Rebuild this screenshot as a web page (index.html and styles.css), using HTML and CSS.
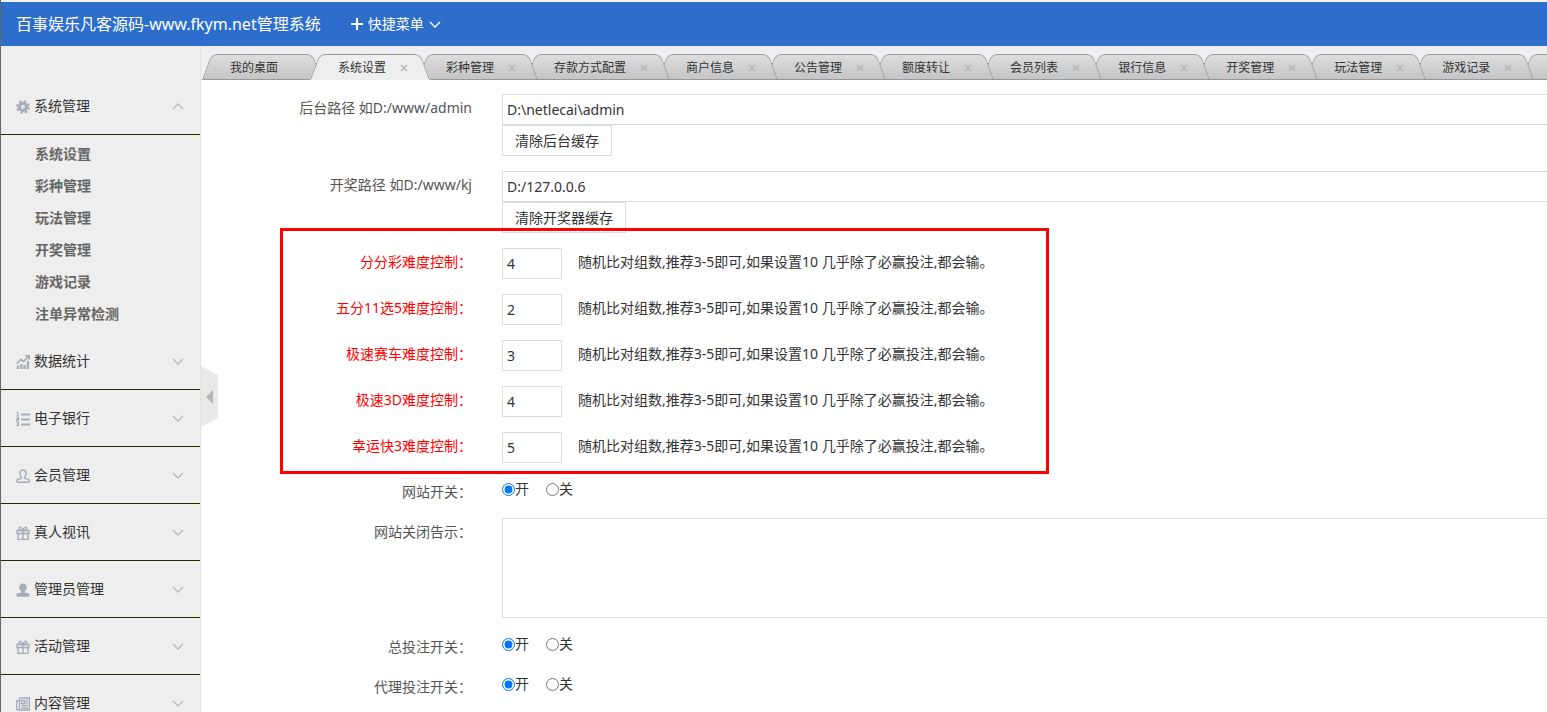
FILE: index.html
```html
<!DOCTYPE html>
<html lang="zh-CN">
<head>
  <meta charset="UTF-8">
  <meta name="viewport" content="width=device-width, initial-scale=1.0">
  <title>百事娱乐凡客源码-www.fkym.net管理系统</title>
  <link rel="stylesheet" href="styles.css">
</head>
<body>
  <!-- Shared icons -->
  <svg class="sprite" aria-hidden="true">
    <symbol id="i-gear" viewBox="0 0 14 14">
      <circle cx="7" cy="7" r="3.6" fill="none" stroke="currentColor" stroke-width="3"/>
      <circle cx="7" cy="7" r="5.800" fill="none" stroke="currentColor" stroke-width="2" stroke-dasharray="2.600 1.955"/>
      <path d="M7 7l3 3" stroke="currentColor" stroke-width="1"/>
    </symbol>
    <symbol id="i-chart" viewBox="0 0 14 14">
      <path d="M2 14v-3.500M5.300 14V9M8.600 14v-4M12 14V6" fill="none" stroke="currentColor" stroke-width="2.400"/>
      <path d="M.8 8.500l4.200-4 2.500 2L12 2" fill="none" stroke="currentColor" stroke-width="1.700"/>
      <path d="M8.500 0H14v5.500z" fill="currentColor"/>
    </symbol>
    <symbol id="i-list" viewBox="0 0 14 14">
      <path d="M5 2.500h9M5 7.500h9M5 12.500h9" stroke="currentColor" stroke-width="2"/>
      <path d="M.5.5h1.200v3M.5 4h2.500M.5 5.500h2v1.800h-2V9h2.500M.5 10.500h2v3h-2M1 12h1.500" fill="none" stroke="currentColor" stroke-width="1.200"/>
    </symbol>
    <symbol id="i-user" viewBox="0 0 14 14">
      <path d="M5.400 8.200C4.300 7 3.900 5.500 3.900 4.200 3.900 2.200 5.200 1 7 1s3.100 1.200 3.100 3.200c0 1.300-.4 2.800-1.500 4v1.100l3.600 1c.8.3 1.200.9 1.200 1.700 0 .8-.4 1.200-1.200 1.200H1.800c-.8 0-1.200-.4-1.200-1.200 0-.8.4-1.400 1.200-1.700l3.600-1z" fill="none" stroke="currentColor" stroke-width="1.400"/>
    </symbol>
    <symbol id="i-user-fill" viewBox="0 0 14 14">
      <path d="M5.400 8.600C4.100 7.500 3.200 6 3.200 4.400 3.200 2 4.900.5 7 .5s3.800 1.500 3.800 3.900c0 1.600-.9 3.100-2.200 4.200v.8l3.600.8c.8.2 1.300.8 1.300 1.600v1.200c0 .5-.3.800-.8.800H1.300c-.5 0-.8-.3-.8-.8v-1.200c0-.8.5-1.400 1.300-1.600l3.600-.8z" fill="currentColor"/>
    </symbol>
    <symbol id="i-gift" viewBox="0 0 14 14">
      <path d="M1 4.500h12v3H1zM2 7.500h10v6H2zM7 4.500v9" fill="none" stroke="currentColor" stroke-width="1.400"/>
      <path d="M7 4.500C5.500 4.500 3.200 4 3.200 2.400 3.200.6 6 .6 7 4.500 8 .6 10.800.6 10.800 2.400 10.800 4 8.500 4.500 7 4.500z" fill="none" stroke="currentColor" stroke-width="1.400"/>
    </symbol>
    <symbol id="i-news" viewBox="0 0 14 14">
      <path d="M3.500 1h10v12H2C1.100 13 .6 12.500.6 11.600V4H3.500M3.500 1v12" fill="none" stroke="currentColor" stroke-width="1.400"/>
      <path d="M5.500 3.500h3v3h-3zM9.500 3.500H12M9.500 6H12M5.500 8.500H12M5.500 11H12" fill="none" stroke="currentColor" stroke-width="1.300"/>
    </symbol>
    <symbol id="i-down" viewBox="0 0 12 7">
      <path d="M1 1l5 5 5-5" fill="none" stroke="currentColor" stroke-width="1.400"/>
    </symbol>
    <symbol id="i-close" viewBox="0 0 8 8">
      <path d="M1 1l6 6M7 1L1 7" fill="none" stroke="currentColor" stroke-width="1.400"/>
    </symbol>
  </svg>

  <header class="header">
    <a class="logo" href="#">百事娱乐凡客源码-www.fkym.net管理系统</a>
    <button class="quick" type="button">
      <svg class="plus" viewBox="0 0 12 12"><path d="M6 0v12M0 6h12" stroke="currentColor" stroke-width="2"/></svg>
      快捷菜单
      <svg class="arrow"><use href="#i-down"/></svg>
    </button>
  </header>

  <div class="layout">
    <aside class="sidebar">
      <a class="menu-title open" href="#"><svg class="icon"><use href="#i-gear"/></svg>系统管理<svg class="arrow"><use href="#i-down"/></svg></a>
      <ul class="submenu">
        <li><a href="#">系统设置</a></li>
        <li><a href="#">彩种管理</a></li>
        <li><a href="#">玩法管理</a></li>
        <li><a href="#">开奖管理</a></li>
        <li><a href="#">游戏记录</a></li>
        <li><a href="#">注单异常检测</a></li>
      </ul>
      <a class="menu-title" href="#"><svg class="icon"><use href="#i-chart"/></svg>数据统计<svg class="arrow"><use href="#i-down"/></svg></a>
      <a class="menu-title" href="#"><svg class="icon"><use href="#i-list"/></svg>电子银行<svg class="arrow"><use href="#i-down"/></svg></a>
      <a class="menu-title" href="#"><svg class="icon"><use href="#i-user"/></svg>会员管理<svg class="arrow"><use href="#i-down"/></svg></a>
      <a class="menu-title" href="#"><svg class="icon"><use href="#i-gift"/></svg>真人视讯<svg class="arrow"><use href="#i-down"/></svg></a>
      <a class="menu-title" href="#"><svg class="icon"><use href="#i-user-fill"/></svg>管理员管理<svg class="arrow"><use href="#i-down"/></svg></a>
      <a class="menu-title" href="#"><svg class="icon"><use href="#i-gift"/></svg>活动管理<svg class="arrow"><use href="#i-down"/></svg></a>
      <a class="menu-title" href="#"><svg class="icon"><use href="#i-news"/></svg>内容管理<svg class="arrow"><use href="#i-down"/></svg></a>
    </aside>

    <main class="main">
      <button class="toggle" type="button" aria-label="收起菜单"></button>

      <ul class="tabs">
        <li class="tab"><a href="#">我的桌面</a></li>
        <li class="tab active"><a href="#">系统设置</a><svg class="close"><use href="#i-close"/></svg></li>
        <li class="tab"><a href="#">彩种管理</a><svg class="close"><use href="#i-close"/></svg></li>
        <li class="tab"><a href="#">存款方式配置</a><svg class="close"><use href="#i-close"/></svg></li>
        <li class="tab"><a href="#">商户信息</a><svg class="close"><use href="#i-close"/></svg></li>
        <li class="tab"><a href="#">公告管理</a><svg class="close"><use href="#i-close"/></svg></li>
        <li class="tab"><a href="#">额度转让</a><svg class="close"><use href="#i-close"/></svg></li>
        <li class="tab"><a href="#">会员列表</a><svg class="close"><use href="#i-close"/></svg></li>
        <li class="tab"><a href="#">银行信息</a><svg class="close"><use href="#i-close"/></svg></li>
        <li class="tab"><a href="#">开奖管理</a><svg class="close"><use href="#i-close"/></svg></li>
        <li class="tab"><a href="#">玩法管理</a><svg class="close"><use href="#i-close"/></svg></li>
        <li class="tab"><a href="#">游戏记录</a><svg class="close"><use href="#i-close"/></svg></li>
        <li class="tab tab-empty"></li>
      </ul>

      <form class="form">
        <div class="row">
          <label class="label" for="admin-path">后台路径 如D:/www/admin</label>
          <div>
            <input class="input" id="admin-path" type="text" value="D:\netlecai\admin">
            <button class="btn" type="button">清除后台缓存</button>
          </div>
        </div>
        <div class="row">
          <label class="label" for="kj-path">开奖路径 如D:/www/kj</label>
          <div>
            <input class="input" id="kj-path" type="text" value="D:/127.0.0.6">
            <button class="btn" type="button">清除开奖器缓存</button>
          </div>
        </div>

        <div class="difficulty">
          <div class="row">
            <label class="label" for="ffc">分分彩难度控制：</label>
            <div class="field"><input class="input short" id="ffc" type="text" value="4"><span>随机比对组数,推荐3-5即可,如果设置10 几乎除了必赢投注,都会输。</span></div>
          </div>
          <div class="row">
            <label class="label" for="wf115">五分11选5难度控制：</label>
            <div class="field"><input class="input short" id="wf115" type="text" value="2"><span>随机比对组数,推荐3-5即可,如果设置10 几乎除了必赢投注,都会输。</span></div>
          </div>
          <div class="row">
            <label class="label" for="jssc">极速赛车难度控制：</label>
            <div class="field"><input class="input short" id="jssc" type="text" value="3"><span>随机比对组数,推荐3-5即可,如果设置10 几乎除了必赢投注,都会输。</span></div>
          </div>
          <div class="row">
            <label class="label" for="js3d">极速3D难度控制：</label>
            <div class="field"><input class="input short" id="js3d" type="text" value="4"><span>随机比对组数,推荐3-5即可,如果设置10 几乎除了必赢投注,都会输。</span></div>
          </div>
          <div class="row">
            <label class="label" for="xyk3">幸运快3难度控制：</label>
            <div class="field"><input class="input short" id="xyk3" type="text" value="5"><span>随机比对组数,推荐3-5即可,如果设置10 几乎除了必赢投注,都会输。</span></div>
          </div>
        </div>

        <div class="row" role="radiogroup" aria-labelledby="site-label">
          <span class="label" id="site-label">网站开关：</span>
          <div class="radios">
            <label><input type="radio" name="site" checked>开</label>
            <label><input type="radio" name="site">关</label>
          </div>
        </div>
        <div class="row">
          <label class="label" for="notice">网站关闭告示：</label>
          <textarea class="input textarea" id="notice"></textarea>
        </div>
        <div class="row" role="radiogroup" aria-labelledby="bet-label">
          <span class="label" id="bet-label">总投注开关：</span>
          <div class="radios">
            <label><input type="radio" name="bet" checked>开</label>
            <label><input type="radio" name="bet">关</label>
          </div>
        </div>
        <div class="row" role="radiogroup" aria-labelledby="agent-label">
          <span class="label" id="agent-label">代理投注开关：</span>
          <div class="radios">
            <label><input type="radio" name="agent" checked>开</label>
            <label><input type="radio" name="agent">关</label>
          </div>
        </div>
      </form>
    </main>
  </div>
</body>
</html>
```

FILE: styles.css
```css
*,
*::before,
*::after {
  box-sizing: border-box;
}
body {
  margin: 0;
  height: 100vh;
  display: flex;
  flex-direction: column;
  overflow: hidden;
  border-left: 1px solid #666;
  font: 14px/22px "Noto Sans", "Noto Sans CJK SC", sans-serif;
  color: #333;
  background: #fff;
}
a {
  color: inherit;
  text-decoration: none;
}
ul {
  list-style: none;
  margin: 0;
  padding: 0;
}
button, input, textarea {
  font: inherit;
  color: inherit;
}
.sprite {
  display: none;
}

/* Header */
.header {
  display: flex;
  align-items: center;
  flex: none;
  gap: 30px;
  height: 46px;
  padding: 0 15px;
  border-top: 2px solid #f4f4f4;
  background: #2d6dcc;
  color: #fff;
}
.logo {
  font-size: 16px;
}
.quick {
  display: flex;
  align-items: center;
  gap: 5px;
  padding: 0;
  border: 0;
  background: none;
}
.plus {
  width: 12px;
  height: 12px;
}
.arrow {
  width: 12px;
  height: 7px;
}

.layout {
  display: flex;
  flex: 1;
  min-height: 0;
}

/* Sidebar */
.sidebar {
  flex: none;
  width: 200px;
  padding-top: 32px;
  border-right: 1px solid #e2e2e2;
  background: #eee;
  overflow: hidden;
}
.menu-title {
  display: flex;
  align-items: center;
  height: 57px;
  padding: 0 16px 0 15px;
  border-bottom: 1px solid #222a00;
}
.menu-title .icon {
  width: 14px;
  height: 14px;
  margin: 2px 4px 0 0;
  color: #a5adb8;
}
.menu-title .arrow {
  margin-left: auto;
  color: #b8b8b8;
}
.menu-title.open .arrow {
  transform: rotate(180deg);
}
.submenu {
  padding: 3px 0;
}
.submenu a {
  display: block;
  padding-left: 34px;
  line-height: 32px;
  font-weight: bold;
  color: #666;
}

/* Content */
.main {
  position: relative;
  flex: 1;
  min-width: 0;
  overflow: hidden;
}
.toggle {
  position: absolute;
  left: 0;
  top: 320px;
  width: 17px;
  height: 61px;
  padding: 0;
  border: 0;
  background: #e8e8e8;
  clip-path: polygon(0 0, 100% 9px, 100% 52px, 0 100%);
}
.toggle::before {
  content: "";
  display: block;
  margin-left: 5px;
  width: 0;
  border: 7px solid transparent;
  border-left: 0;
  border-right-color: #b5b5b5;
}

/* Tabs */
.tabs {
  display: flex;
  height: 34px;
  padding: 8px 0 0 1px;
  background: #efeef0;
  position: relative;
  z-index: 0;
  overflow: hidden;
}
.tab {
  position: relative;
  display: flex;
  align-items: center;
  flex: none;
  height: 26px;
  padding: 1px 22px 0 28px;
  margin-right: -12px;
  font-size: 12px;
  line-height: 26px;
}
.tab:first-child {
  padding-right: 44px;
}
.tab-empty {
  width: 120px;
}
/* two slanted halves make the tab shape */
.tab::before,
.tab::after {
  content: "";
  position: absolute;
  z-index: -1;
  top: 0;
  bottom: 0;
  border: 1px solid #999;
  background: linear-gradient(#dddddd, #c5c5c7);
}
.tab::before {
  left: 0;
  right: 50%;
  border-right: 0;
  border-radius: 6px 0 0 0;
  transform: skewX(-20deg);
  transform-origin: bottom left;
}
.tab::after {
  left: 50%;
  right: 0;
  border-left: 0;
  border-radius: 0 6px 0 0;
  transform: skewX(20deg);
  transform-origin: bottom right;
}
.tab.active::before,
.tab.active::after {
  background: #eee;
  border-bottom-color: #eee;
}
.close {
  width: 8px;
  height: 8px;
  margin-left: 14px;
  color: #b0b5ba;
}
/* each tab lies over the one after it */
.tab:nth-child(1) { z-index: 12; }
.tab:nth-child(2) { z-index: 13; }
.tab:nth-child(3) { z-index: 11; }
.tab:nth-child(4) { z-index: 10; }
.tab:nth-child(5) { z-index: 9; }
.tab:nth-child(6) { z-index: 8; }
.tab:nth-child(7) { z-index: 7; }
.tab:nth-child(8) { z-index: 6; }
.tab:nth-child(9) { z-index: 5; }
.tab:nth-child(10) { z-index: 4; }
.tab:nth-child(11) { z-index: 3; }
.tab:nth-child(12) { z-index: 2; }
.tab:nth-child(13) { z-index: 1; }

/* Form */
.form {
  display: flex;
  flex-direction: column;
  gap: 15px;
  margin: 14px -20px 0 0;
}
.row {
  display: grid;
  grid-template-columns: 271px 1fr;
  column-gap: 30px;
}
.label {
  padding-top: 3px;
  text-align: right;
  color: #555;
}
.input {
  display: block;
  width: 100%;
  height: 31px;
  padding: 0 4px;
  border: 1px solid #ddd;
  background: #fff;
}
.input.short {
  width: 60px;
}
.textarea {
  height: 100px;
  resize: none;
}
.btn {
  display: block;
  height: 31px;
  padding: 0 12px;
  border: 1px solid #ddd;
  background: #fff;
}
.field {
  display: flex;
  gap: 16px;
}
.field span {
  padding-top: 3px;
}
.difficulty {
  position: relative;
  display: flex;
  flex-direction: column;
  gap: 15px;
}
.difficulty .label {
  color: #f00;
}
.difficulty::after {
  content: "";
  position: absolute;
  left: 79px;
  top: -20px;
  bottom: -11px;
  width: 769px;
  border: 3px solid #f00;
  pointer-events: none;
}
.radios {
  display: flex;
  gap: 17px;
}
.radios label {
  display: flex;
  align-items: center;
  height: 22px;
}
.radios input {
  width: 13px;
  height: 13px;
  margin: 0;
}
```
